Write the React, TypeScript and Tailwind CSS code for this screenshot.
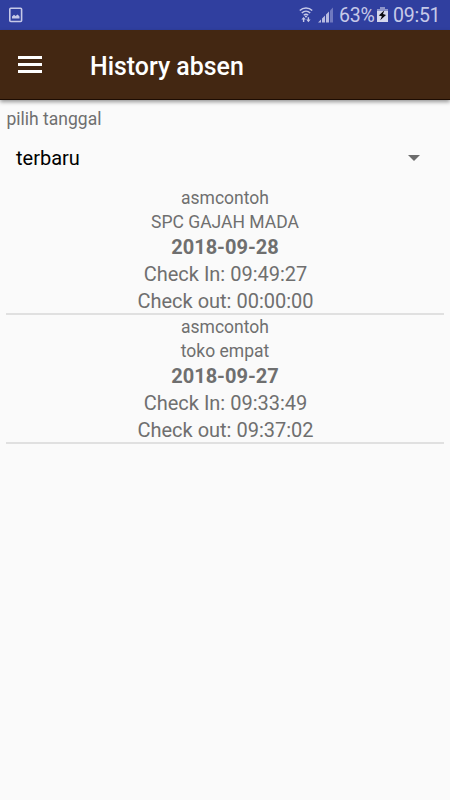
const records = [
  { user: 'asmcontoh', place: 'SPC GAJAH MADA', date: '2018-09-28', checkIn: '09:49:27', checkOut: '00:00:00' },
  { user: 'asmcontoh', place: 'toko empat', date: '2018-09-27', checkIn: '09:33:49', checkOut: '09:37:02' },
];

function PictureIcon() {
  return (
    <svg className="h-4 w-4" viewBox="0 0 16 16" fill="none">
      <rect x="1.8" y="1.3" width="11.8" height="13.2" rx="1" stroke="#c6c9e8" strokeWidth="1.6" />
      <path d="M4 11.5V9.5L6 7.8L7.6 9L9.6 7.4L11.5 9.6V11.5Z" fill="#c6c9e8" />
    </svg>
  );
}

function WifiIcon() {
  return (
    <svg className="h-[18px] w-[14px]" viewBox="0 0 14 18" fill="none">
      <path d="M.8 4.6C4.3 1 9.7 1 13.2 4.6M2.8 7C5.3 4.6 8.7 4.6 11.2 7M4.8 9.2C6.1 8 7.9 8 9.2 9.2" stroke="#c6c9e8" strokeWidth="1.5" />
      <path d="M7 9.2L8.3 10.5L7 11.8L5.7 10.5Z" fill="#c6c9e8" />
      <path d="M4.6 11L6.8 13.6H5.3V16H3.9V13.6H2.4ZM9.4 16.2L7.2 13.6H8.7V11.2H10.1V13.6H11.6Z" fill="#c6c9e8" />
    </svg>
  );
}

function SignalIcon() {
  return (
    <svg className="h-4 w-4" viewBox="0 0 16 16">
      <path d="M0 15.5L3 12.5V15.5ZM4 11.5L7 8.5V15.5H4ZM8 7.5L11 4.5V15.5H8Z" fill="#b7bbe1" />
      <path d="M12 3.5L15 .5V15.5H12Z" fill="#7079bf" />
    </svg>
  );
}

function BatteryIcon() {
  return (
    <svg className="h-4 w-[11px]" viewBox="0 0 11 16">
      <path d="M3 0H8V2H11V5H0V2H3Z" fill="#8d94ca" />
      <path d="M0 4H11V15H0Z" fill="#d5d8ed" />
      <path d="M7.4 3.2L1.8 8.6L4.9 9.3L3.2 13.2L9 7.9L6 7.1Z" fill="#080910" />
    </svg>
  );
}

export default function App() {
  return (
    <div className="flex h-[800px] w-[450px] flex-col overflow-hidden bg-[#fafafa] font-[Roboto,sans-serif] text-[#6f6f6f]">
      <div className="flex h-[30px] shrink-0 items-center bg-[#303f9f] pl-2 pr-[9px] text-[19.5px] leading-[28px] tracking-[-0.25px] text-[#c6c9e8]">
        <PictureIcon />
        <div className="ml-auto flex items-center">
          <WifiIcon />
          <div className="ml-[5px]"><SignalIcon /></div>
          <span className="ml-[5px] w-[35px] whitespace-nowrap pt-0.5">63%</span>
          <div className="ml-[3px]"><BatteryIcon /></div>
          <span className="ml-[5px] w-[48px] pt-0.5">09:51</span>
        </div>
      </div>
      <header className="z-10 flex h-[70px] shrink-0 items-center border-b border-[#1d0c02] bg-[#432712] pl-[18px] shadow-[0_2px_4px_rgba(0,0,0,0.4)]">
        <div className="flex w-6 flex-col gap-1">
          <div className="h-[3px] bg-white" />
          <div className="h-[3px] bg-white" />
          <div className="h-[3px] bg-white" />
        </div>
        <h1 className="ml-12 pt-1 text-[24.9px] font-medium leading-[30px] text-white">History absen</h1>
      </header>
      <main className="px-1.5 pt-2">
        <p className="pl-[0.5px] text-[17.5px] leading-[23px]">pilih tanggal</p>
        <div className="mb-px flex h-[54px] items-center justify-between pl-2.5 pr-6 text-[20px] text-black">
          <span>terbaru</span>
          <svg className="h-1.5 w-3" viewBox="0 0 12 6"><path d="M0 0H12L6 6Z" fill="#6c6c6c" /></svg>
        </div>
        {records.map((r) => (
          <section key={r.date} className="h-[129px] border-b-2 border-[#e0e0e0] text-center text-[20px] leading-[27px]">
            <p className="text-[17.5px] leading-6">{r.user}</p>
            <p className="text-[17.5px] leading-6">{r.place}</p>
            <p className="font-bold">{r.date}</p>
            <p className="pl-px">Check In: {r.checkIn}</p>
            <p className="h-[25px] pl-px">Check out: {r.checkOut}</p>
          </section>
        ))}
      </main>
    </div>
  );
}
